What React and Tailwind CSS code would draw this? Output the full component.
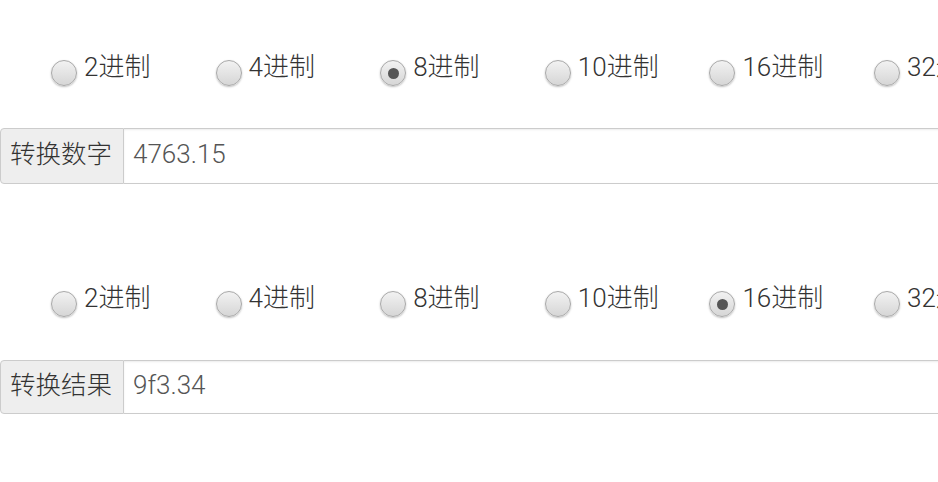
import React from "react";

const FONT = { fontFamily: "Roboto, 'Noto Sans CJK SC', 'Noto Sans', sans-serif" };
const bases = ["2进制", "4进制", "8进制", "10进制", "16进制", "32进制"];

function Radio({ label, checked }) {
  return (
    <div className="flex items-start w-[164.6px] shrink-0">
      <div className="mt-[7px] w-[26px] h-[26px] rounded-full border border-[#a8a8a8] bg-gradient-to-b from-[#f2f2f2] to-[#d6d6d6] shadow-[0_1px_2px_rgba(0,0,0,0.25)] flex items-center justify-center shrink-0">
        {checked && <div className="w-[11px] h-[11px] rounded-full bg-[#555]" />}
      </div>
      <span className="ml-[7px] text-[26px] leading-[28px] font-light text-[#333] whitespace-nowrap">{label}</span>
    </div>
  );
}

function Row({ checkedIndex }) {
  return (
    <div className="flex pl-[51px] h-[33px]">
      {bases.map((b, i) => (
        <Radio key={b} label={b} checked={i === checkedIndex} />
      ))}
    </div>
  );
}

function Field({ label, value, h }) {
  return (
    <div className={`flex ${h} w-[1100px]`}>
      <div className="w-[124px] shrink-0 flex items-center pl-[9px] pb-[3px] bg-[#eeeeee] border border-[#cccccc] rounded-l-[4px] text-[25.5px] font-light text-[#333]">
        {label}
      </div>
      <div className="flex-1 flex items-center pl-[9px] pb-[3px] bg-white border border-l-0 border-[#cccccc] shadow-[inset_0_1px_2px_rgba(0,0,0,0.08)] text-[26px] font-light text-[#555]">
        {value}
      </div>
    </div>
  );
}

export default function App() {
  return (
    <div className="w-[938px] h-[482px] overflow-hidden bg-white" style={FONT}>
      <div className="pt-[53px]">
        <Row checkedIndex={2} />
        <div className="mt-[42px]">
          <Field label="转换数字" value="4763.15" h="h-[56px]" />
        </div>
        <div className="mt-[100px]">
          <Row checkedIndex={4} />
        </div>
        <div className="mt-[43px]">
          <Field label="转换结果" value="9f3.34" h="h-[54px]" />
        </div>
      </div>
    </div>
  );
}
